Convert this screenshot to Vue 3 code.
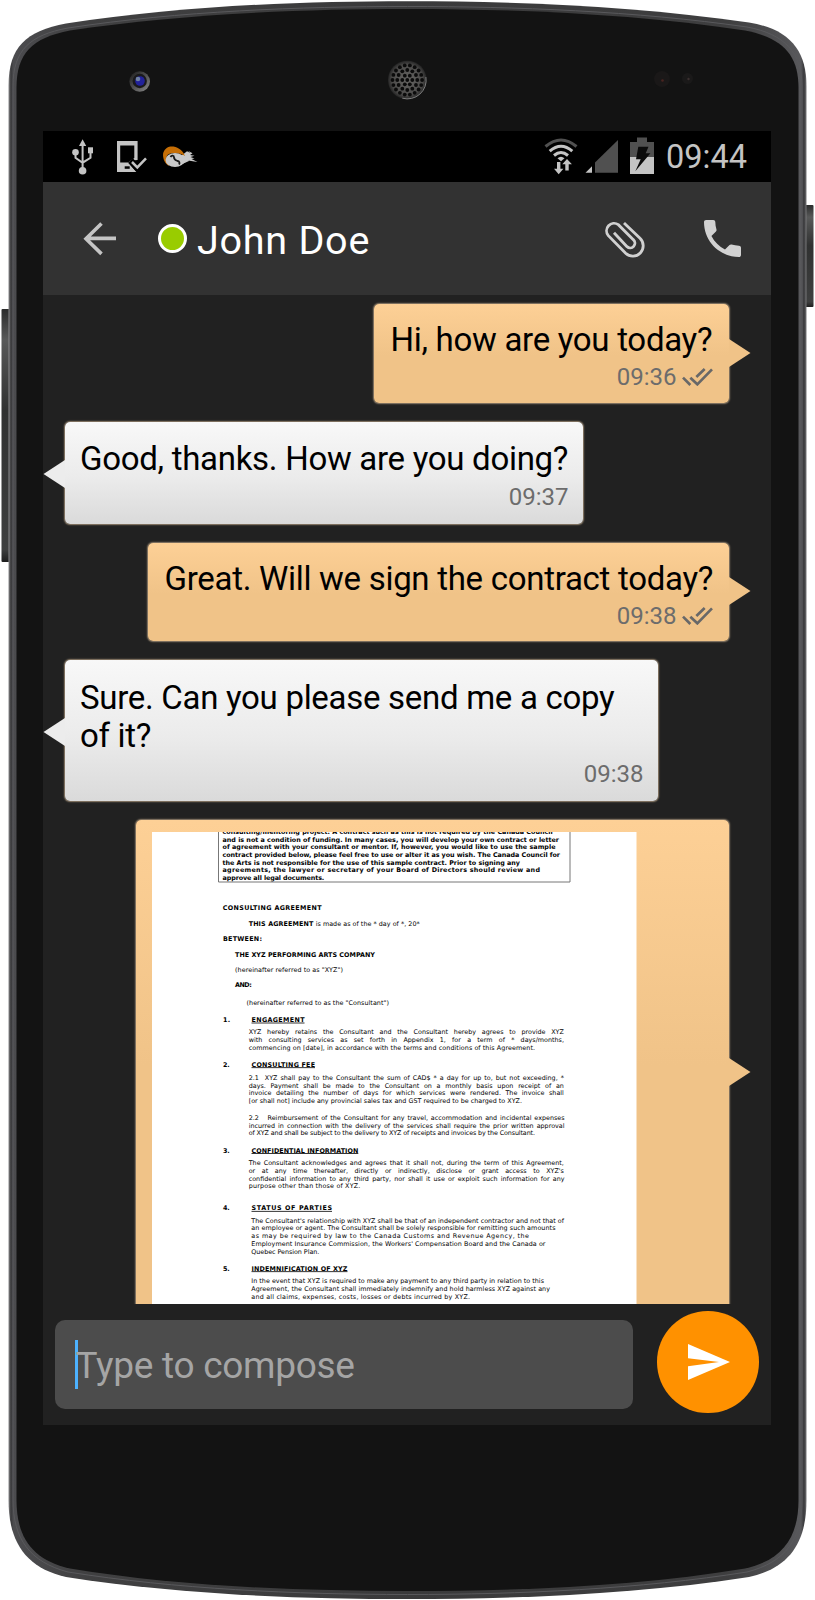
<script setup>
import { onMounted, ref } from 'vue'

const messages = [
  { out: true, lines: ['Hi, how are you today?'], time: '09:36', cls: 'm1' },
  { out: false, lines: ['Good, thanks. How are you doing?'], time: '09:37', cls: 'm2' },
  { out: true, lines: ['Great. Will we sign the contract today?'], time: '09:38', cls: 'm3' },
  { out: false, lines: ['Sure. Can you please send me a copy', 'of it?'], time: '09:38', cls: 'm4' },
]

// text, start x, end x, baseline, style: b = bold, u = bold underlined, j = justified
const rows = [
  ['consulting/mentoring project. A contract such as this is not required by the Canada Council', 222.5, 552.7, 834.3, 'b'],
  ['and is not a condition of funding. In many cases, you will develop your own contract or letter', 222.5, 559, 841.6, 'b'],
  ['of agreement with your consultant or mentor. If, however, you would like to use the sample', 222.5, 555.5, 849, 'b'],
  ['contract provided below, please feel free to use or alter it as you wish. The Canada Council for', 222.5, 560, 856.7, 'b'],
  ['the Arts is not responsible for the use of this sample contract. Prior to signing any', 222.5, 520, 864.6, 'b'],
  ['agreements, the lawyer or secretary of your Board of Directors should review and', 222.5, 540, 872.3, 'b'],
  ['approve all legal documents.', 222.5, 324.3, 880, 'b'],
  ['CONSULTING AGREEMENT', 222.7, 321.5, 910.3, 'b'],
  ['THIS AGREEMENT', 248.7, 313.3, 925.7, 'b'],
  ['is made as of the * day of *, 20*', 315.7, 419.7, 925.7, ''],
  ['BETWEEN:', 223, 262, 941, 'b'],
  ['THE XYZ PERFORMING ARTS COMPANY', 235, 375, 956.7, 'b'],
  ['(hereinafter referred to as "XYZ")', 235, 343, 972, ''],
  ['AND:', 235, 251.7, 987, 'b'],
  ['(hereinafter referred to as the "Consultant")', 246.5, 389, 1004.7, ''],
  ['1.', 223, 230.3, 1022, 'b'],
  ['ENGAGEMENT', 251.5, 304.5, 1022, 'u'],
  ['XYZ hereby retains the Consultant and the Consultant hereby agrees to provide XYZ', 248.7, 564.3, 1034.3, 'j'],
  ['with consulting services as set forth in Appendix 1, for a term of * days/months,', 248.7, 564.3, 1042.3, 'j'],
  ['commencing on [date], in accordance with the terms and conditions of this Agreement.', 248.7, 535, 1050, ''],
  ['2.', 223, 229.6, 1066.7, 'b'],
  ['CONSULTING FEE', 251.5, 315, 1066.7, 'u'],
  ['2.1  XYZ shall pay to the Consultant the sum of CAD$ * a day for up to, but not exceeding, *', 248.7, 564.3, 1080, 'j'],
  ['days. Payment shall be made to the Consultant on a monthly basis upon receipt of an', 248.7, 564.3, 1087.7, 'j'],
  ['invoice detailing the number of days for which services were rendered. The invoice shall', 248.7, 564.3, 1095.2, 'j'],
  ['[or shall not] include any provincial sales tax and GST required to be charged to XYZ.', 248.7, 522, 1103, ''],
  ['2.2   Reimbursement of the Consultant for any travel, accommodation and incidental expenses', 248.7, 565, 1120, 'j'],
  ['incurred in connection with the delivery of the services shall require the prior written approval', 248.7, 565, 1128, 'j'],
  ['of XYZ and shall be subject to the delivery to XYZ of receipts and invoices by the Consultant.', 248.7, 535, 1135.3, ''],
  ['3.', 223, 229.6, 1152.5, 'b'],
  ['CONFIDENTIAL INFORMATION', 251.5, 358.3, 1152.5, 'u'],
  ['The Consultant acknowledges and agrees that it shall not, during the term of this Agreement,', 248.7, 564.3, 1165, 'j'],
  ["or at any time thereafter, directly or indirectly, disclose or grant access to XYZ's", 248.7, 564.3, 1172.7, 'j'],
  ['confidential information to any third party, nor shall it use or exploit such information for any', 248.7, 565, 1180.7, 'j'],
  ['purpose other than those of XYZ.', 248.7, 360.3, 1188, ''],
  ['4.', 223, 229.6, 1210.3, 'b'],
  ['STATUS OF PARTIES', 251.5, 332, 1210.3, 'u'],
  ["The Consultant's relationship with XYZ shall be that of an independent contractor and not that of", 251.3, 564, 1222.9, ''],
  ['an employee or agent. The Consultant shall be solely responsible for remitting such amounts', 251.3, 555.5, 1230.4, ''],
  ['as may be required by law to the Canada Customs and Revenue Agency, the', 251.3, 529, 1238, ''],
  ["Employment Insurance Commission, the Workers' Compensation Board and the Canada or", 251.3, 545.5, 1246, ''],
  ['Quebec Pension Plan.', 251.3, 319.3, 1253.7, ''],
  ['5.', 223, 229.6, 1270.7, 'b'],
  ['INDEMNIFICATION OF XYZ', 251.5, 347.5, 1270.7, 'u'],
  ['In the event that XYZ is required to make any payment to any third party in relation to this', 251.3, 544, 1283.4, ''],
  ['Agreement, the Consultant shall immediately indemnify and hold harmless XYZ against any', 251.3, 550, 1291, ''],
  ['and all claims, expenses, costs, losses or debts incurred by XYZ.', 251.3, 470, 1298.7, ''],
].map(([text, x, end, y, kind]) => ({ text, x, end, y, kind, gap: 0 }))

const docRows = ref(rows)

// Justified paragraphs stretch the gaps between words only.
onMounted(() => {
  const ctx = document.createElement('canvas').getContext('2d')
  ctx.font = '64px "DejaVu Sans"'
  docRows.value.forEach((r) => {
    if (r.kind !== 'j') return
    const natural = ctx.measureText(r.text).width / 10
    r.gap = (r.end - r.x - natural) / (r.text.split(' ').length - 1)
  })
})

// Speaker grille: concentric rings of holes.
const holes = [{ x: 0, y: 0 }]
;[[5, 6], [10, 12], [14.8, 18]].forEach(([rad, n]) => {
  for (let i = 0; i < n; i++) {
    const a = (i / n) * Math.PI * 2
    holes.push({ x: rad * Math.cos(a), y: rad * Math.sin(a) })
  }
})
</script>

<template>
  <div class="stage">
    <svg class="shell" width="815" height="1600" viewBox="0 0 815 1600" aria-hidden="true">
      <defs>
        <linearGradient id="rim" x1="0" x2="1" y1="0" y2="0">
          <stop offset="0" stop-color="#8b8b8d" />
          <stop offset=".003" stop-color="#38383a" />
          <stop offset=".006" stop-color="#4c4c4f" />
          <stop offset=".1" stop-color="#404041" />
          <stop offset=".5" stop-color="#3a3a3b" />
          <stop offset=".9" stop-color="#3e3e3f" />
          <stop offset=".993" stop-color="#58585b" />
          <stop offset=".997" stop-color="#38383a" />
          <stop offset="1" stop-color="#777779" />
        </linearGradient>
        <linearGradient id="btn" x1="0" x2="0" y1="0" y2="1">
          <stop offset="0" stop-color="#2b2c2c" />
          <stop offset=".12" stop-color="#585959" />
          <stop offset=".4" stop-color="#303131" />
          <stop offset=".95" stop-color="#3e3f3f" />
          <stop offset="1" stop-color="#1d1d1d" />
        </linearGradient>
        <radialGradient id="grille">
          <stop offset="0" stop-color="#666563" />
          <stop offset=".8" stop-color="#4b4a49" />
          <stop offset="1" stop-color="#242424" />
        </radialGradient>
        <linearGradient id="lens" x1="0" x2="1" y1="0" y2="1">
          <stop offset="0" stop-color="#171717" />
          <stop offset="1" stop-color="#8c8c8c" />
        </linearGradient>
      </defs>
      <rect x="1.5" y="309" width="9" height="253" rx="1" fill="url(#btn)" />
      <rect x="804" y="205" width="9.5" height="102" rx="1" fill="url(#btn)" />
      <path
        d="M8.5 86C8.5 47 26 31 66 23.5C180 6 300 1.2 407.500 1.200C515 1.200 635 6 749 22.500C789 29 806.500 50 806.500 86V1500C806.500 1542 790 1568 749 1577C640 1594 520 1599 407.500 1599C295 1599 175 1594 66 1577C26 1568 8.500 1542 8.500 1500Z"
        fill="url(#rim)"
      />
      <path
        d="M13 86C13 50 30 35 68 28C180 11 300 6.500 407.500 6.500C515 6.500 635 11 747 27C785 34 802 53 802 86V1500C802 1539 786 1562 747 1572C640 1589 520 1594.500 407.500 1594.500C295 1594.500 175 1589 68 1572C30 1562 13 1539 13 1500Z"
        fill="none" stroke="#59595c" stroke-width="1"
      />
      <path
        d="M16.500 88C16.500 53 32 38 70 30.500C180 14 300 9 407.500 9C515 9 635 14 745 30.500C783 38 798.500 55 798.500 88V1500C798.500 1537 783 1560 745 1568.500C640 1586 520 1591 407.500 1591C295 1591 175 1586 70 1568.500C32 1560 16.500 1537 16.500 1500Z"
        fill="#131313"
      />
      <circle cx="139.700" cy="81.500" r="10.300" fill="url(#lens)" />
      <circle cx="139.700" cy="81" r="7.200" fill="#1a1a1c" />
      <circle cx="140" cy="81" r="4.800" fill="#22229b" />
      <circle cx="138" cy="79" r="2.300" fill="#6f81a5" />
      <g transform="translate(407.300 80)">
        <circle r="19.300" fill="url(#grille)" />
        <path d="M18.600 -3A18.800 18.800 0 0 1 -5 18.200" fill="none" stroke="#858585" stroke-width=".9" />
        <circle v-for="(h, i) in holes" :key="i" :cx="h.x" :cy="h.y" r="1.9" fill="#0b0b0b" />
      </g>
      <circle cx="662" cy="79" r="8" fill="#1a1818" /><circle cx="662.500" cy="80.500" r="1.300" fill="#4a2420" />
      <circle cx="687.500" cy="78.500" r="5.500" fill="#1a1919" /><circle cx="688.500" cy="79" r="1.200" fill="#3a3030" />
    </svg>

    <main class="screen">
      <div class="status">
        <svg class="usb" width="22" height="37" viewBox="72 139 22 37">
          <g fill="#c4c4c4">
            <path d="M82.600 139.200L86.200 146H79z" /><circle cx="82.600" cy="170.700" r="3.800" />
            <circle cx="75.500" cy="152.200" r="3.300" /><path d="M88 147.300h5v6h-5z" />
          </g>
          <path d="M82.600 144V170M75.500 152V157.800L82.600 162.700L90.500 157.800V152" fill="none" stroke="#c4c4c4" stroke-width="2" />
        </svg>
        <svg class="tab" width="30" height="32" viewBox="117 141 30 32">
          <path d="M117 141H137.600V160L132 160.500L130.500 163.500L135.800 172H117zM120.200 145.500V162.500H128L134.300 158V145.500z" fill="#c4c4c4" fill-rule="evenodd" />
          <path d="M130.500 160.500L137 168L146.500 157.500" fill="none" stroke="#000" stroke-width="6.500" />
          <path d="M117 164H128.500L136.300 172H117z" fill="#c4c4c4" /><path d="M124.700 166.300h5v2.500h-5z" fill="#000" />
          <path d="M132 162L137.300 167.400L146 158.300" fill="none" stroke="#c4c4c4" stroke-width="2.500" />
        </svg>
        <svg class="bird" width="35" height="22" viewBox="163 146 35 22">
          <path d="M181 156L187 151.300L190.500 153L188 150.700L192.500 153.200L190 155L194.500 155.800L190.500 157L194.500 158.500L191.500 159L197.500 162L188 160.500L181 165z" fill="#c9c9c9" />
          <path d="M163.200 153C165 147.500 169 146 173.500 146.500C179 147.500 183 151 185 156C180 152.500 171 152 167.500 155C165.500 158 166 162 169.500 166C164 163.500 162.500 157 163.200 153z" fill="#c66e05" />
          <ellipse cx="175" cy="160" rx="9.500" ry="6.900" fill="#c9c9c9" /><path d="M180 154.500L187 157L189 161L180 165z" fill="#c9c9c9" />
          <path d="M170.500 157C171.500 155 174 155.200 174 157.300C174 159.300 176 160.500 177.500 161C179.500 161 180 163 179 164.500" fill="none" stroke="#171717" stroke-width="1.800" />
        </svg>
        <span class="grow"></span>
        <svg class="wifi" width="34" height="37" viewBox="544 138 34 37">
          <g fill="none" stroke="#c4c4c4" stroke-width="3">
            <path d="M545.500 146.500Q561 133.500 576.500 146.500" stroke="#515151" />
            <path d="M549.700 151.200Q561 141.200 572.300 151.200" /><path d="M554 155.500Q561 149.500 568 155.500" />
          </g>
          <g fill="#c4c4c4">
            <path d="M557.500 158.200Q561 155.200 564.500 158.200L561 161.300z" />
            <path d="M557 162h3.400v6.800h3L558.700 174.300L554 168.800h3zM565.300 170.500h3.400v-6.200h3.200L567 159L562.300 164.300h3z" />
          </g>
        </svg>
        <svg class="signal" width="33" height="34" viewBox="585 140 33 34">
          <path d="M595 162.500L618 140V172.800H595z" fill="#505050" /><path d="M585.500 172.800L592 166.300V172.800z" fill="#c4c4c4" />
        </svg>
        <svg class="battery" width="24" height="37" viewBox="630 137 24 37">
          <path d="M637 137.500h10v4.500h7v15h-24v-15h7z" fill="#505050" /><path d="M630 157h24v17h-24z" fill="#c4c4c4" />
          <path d="M638.300 146.700H648.500L645.700 153.300H650.400L635.300 171.300L640.700 159.300H636z" fill="#0b0b0b" />
        </svg>
        <span class="clock">09:44</span>
      </div>

      <header class="appbar">
        <svg class="back" width="33" height="34" viewBox="83 222 33 34">
          <path d="M101.500 223.500L86 238.700L101.500 253.900M86 238.400H116" fill="none" stroke="#c5c5c5" stroke-width="3.600" />
        </svg>
        <span class="presence"></span>
        <h1>John Doe</h1>
        <span class="grow"></span>
        <svg class="clip" width="41" height="38" viewBox="224 269 123 114">
          <path d="M284 278L332 324A31 31 0 0 1 289 369L237 316A22.500 22.500 0 0 1 267 283L312 328A14 14 0 0 1 293 349L254 307" fill="none" stroke="#d0d0d0" stroke-width="8.500" />
        </svg>
        <svg class="call" width="37" height="37" viewBox="3 3 18 18">
          <path d="M6.620 10.790c1.440 2.830 3.760 5.140 6.590 6.590l2.200-2.200c.270-.270.670-.360 1.020-.240 1.120.370 2.330.570 3.570.570.550 0 1 .450 1 1V20c0 .550-.450 1-1 1-9.390 0-17-7.610-17-17 0-.550.450-1 1-1h3.500c.550 0 1 .450 1 1 0 1.250.200 2.450.570 3.570.110.350.030.740-.250 1.020l-2.200 2.200z" fill="#d2d2d2" />
        </svg>
      </header>

      <section class="chat">
        <article v-for="m in messages" :key="m.cls" class="bubble" :class="[m.out ? 'out' : 'in', m.cls]">
          <p v-for="l in m.lines" :key="l"><span>{{ l }}</span></p>
          <footer>
            <time>{{ m.time }}</time>
            <svg v-if="m.out" width="31" height="18" viewBox="965 217 93 54">
              <path d="M968 246L990 268M990 246L1011 266L1055 221M1008 244L1033 220" fill="none" stroke="#686868" stroke-width="8" />
            </svg>
          </footer>
          <svg class="tip" width="22" height="28" viewBox="0 0 22 28"><path d="M0 0L21.500 14L0 28z" /></svg>
        </article>

        <article class="bubble out file">
          <svg class="doc" width="485" height="472" viewBox="152 832 485 472">
            <rect x="151" y="831" width="485.5" height="474" fill="#fff" />
            <path d="M218.500 830V882H570V830" fill="none" stroke="#777" stroke-width="1" />
            <text
              v-for="(r, i) in docRows" :key="i" :x="r.x" :y="r.y"
              :class="{ bold: r.kind === 'b' || r.kind === 'u' }"
              :textLength="r.kind === 'j' ? undefined : r.end - r.x"
              :word-spacing="r.gap"
            >{{ r.text }}</text>
            <template v-for="(r, i) in docRows" :key="'u' + i">
              <rect v-if="r.kind === 'u'" :x="r.x" :y="r.y + .6" :width="r.end - r.x" height=".8" fill="#000" />
            </template>
          </svg>
          <svg class="tip" width="22" height="28" viewBox="0 0 22 28"><path d="M0 0L21.500 14L0 28z" /></svg>
        </article>
      </section>

      <div class="composer">
        <div class="field"><i class="caret"></i><span>Type to compose</span></div>
        <button class="send" type="button" aria-label="Send">
          <svg width="42" height="36" viewBox="0 0 42 36"><path d="M0 0L42 18L0 36V22.200L31 18L0 14.200z" fill="#fff" /></svg>
        </button>
      </div>
    </main>
  </div>
</template>

<style>
body { margin: 0; background: #fff; }
</style>

<style scoped>
.stage { position: relative; box-sizing: border-box; width: 815px; height: 1600px; padding: 131px 0 0 43px; overflow: hidden; background: #fff; font-family: Roboto, "Noto Sans", sans-serif; }
.shell { position: absolute; left: 0; top: 0; }
.screen { position: relative; width: 727.500px; height: 1294px; display: flex; flex-direction: column; background: #212121; }
svg { display: block; flex: none; }
.grow { flex: 1; }

.status { display: flex; align-items: flex-start; height: 51px; background: #000; flex: none; }
.usb { margin: 8px 0 0 29px; }
.tab { margin: 10px 0 0 23px; }
.bird { margin: 15px 0 0 16px; }
.wifi { margin: 7px 7px 0 0; }
.signal { margin: 9px 12px 0 0; }
.battery { margin: 6px 12px 0 0; }
.clock { width: 81px; margin-right: 23.500px; margin-top: 7px; font-size: 32.500px; line-height: 38px; color: #c4c4c4; white-space: nowrap; }

.appbar { display: flex; align-items: center; height: 113px; background: #323232; flex: none; }
.back { margin-left: 40px; }
.presence { box-sizing: border-box; width: 29px; height: 29px; margin-left: 42px; border: 3px solid #fff; border-radius: 50%; background: #99cc00; flex: none; }
h1 { margin: 4px 0 0 10px; font-size: 39.500px; line-height: 46px; font-weight: 400; color: #fff; white-space: nowrap; letter-spacing: .750px; }
.clip { margin-right: 58.500px; }
.call { margin-right: 30px; }

.chat { display: flex; flex-direction: column; height: 1000px; padding-top: 8.500px; flex: none; overflow: hidden; }
.bubble { position: relative; box-sizing: border-box; flex: none; border-radius: 5px; box-shadow: 0 0 1.500px 1px #94836d; }
.out { align-self: flex-end; margin-right: 41.500px; padding: 17px 16.500px 0; background: linear-gradient(#fdd096, #f0c388 52%, #f0c388); }
.in { align-self: flex-start; margin-left: 21.500px; padding: 18.500px 14px 0 15.500px; background: linear-gradient(#f8f8f8, #ebebeb 55%, #dadada); }
.m1 { width: 355px; height: 99px; }
.m2 { width: 518px; height: 102.500px; margin-top: 19px; }
.m3 { width: 581px; height: 98.500px; margin-top: 18.500px; }
.m4 { width: 593px; height: 141px; margin-top: 19px; }
.m4 footer { margin-top: 5.500px; }
.file { width: 593.500px; height: 600px; margin-top: 18.500px; padding: 12px 0 0 16px; background: linear-gradient(#fdd096, #f0c388 245px, #f0c388); }
p { margin: 0; font-size: 33px; line-height: 38px; letter-spacing: -.290px; color: #000; white-space: nowrap; }
footer { display: flex; justify-content: flex-end; align-items: center; height: 28px; margin-top: 4.500px; color: #6c6c6c; }
time { font-size: 24px; line-height: 28px; }
footer svg { margin-left: 5px; }
.tip { position: absolute; top: 50%; margin-top: -14.500px; }
.in .tip { margin-top: -13px; }
.out .tip { left: calc(100% - .5px); fill: #f0c388; }
.in .tip { right: calc(100% - .5px); transform: scaleX(-1); fill: #ececec; }
.file .tip { top: 252.500px; }
.doc text { font-family: "DejaVu Sans", sans-serif; font-size: 6.400px; fill: #000; white-space: pre; }
.doc .bold { font-weight: 700; }

.composer { display: flex; padding: 0 12px; justify-content: space-between; align-items: flex-start; flex: none; }
.field { display: flex; align-items: center; box-sizing: border-box; width: 578px; height: 89px; margin-top: 16px; padding-left: 20px; border-radius: 10px; background: #4c4c4c; }
.caret { width: 3px; height: 49px; background: #4db2ff; flex: none; }
.field span { margin: 3px 0 0 -2.500px; font-size: 37px; line-height: 44px; letter-spacing: -.280px; color: #a5a5a5; white-space: nowrap; }
.send { display: flex; align-items: center; justify-content: center; width: 101.500px; height: 101.500px; margin-top: 7.500px; padding: 0 0 0 3px; box-sizing: border-box; border: 0; border-radius: 50%; background: #ff9100; }
</style>
